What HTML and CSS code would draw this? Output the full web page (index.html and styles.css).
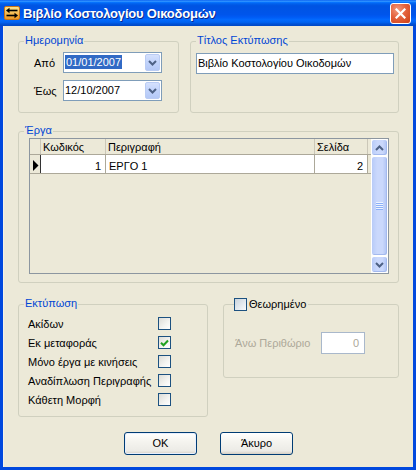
FILE: index.html
```html
<!DOCTYPE html>
<html>
<head>
<meta charset="utf-8">
<title>Βιβλίο Κοστολογίου Οικοδομών</title>
<link rel="stylesheet" href="styles.css">
</head>
<body>
<div class="window">
  <div class="titlebar">
    <svg class="app-icon" width="16" height="14" viewBox="0 0 16 14">
      <defs>
        <linearGradient id="ig" x1="0" y1="0" x2="0" y2="1">
          <stop offset="0" stop-color="#FFE68C"/>
          <stop offset="1" stop-color="#EE9420"/>
        </linearGradient>
      </defs>
      <rect x="0.5" y="0.5" width="15" height="13" rx="1.5" fill="url(#ig)" stroke="#C87418"/>
      <path d="M5 4.5H13.5" stroke="#000" stroke-width="1.6"/>
      <path d="M2 4.5L5.5 1.8V7.2Z" fill="#000"/>
      <path d="M2.5 9.5H11" stroke="#000" stroke-width="1.6"/>
      <path d="M14 9.5L10.5 6.8V12.2Z" fill="#000"/>
    </svg>
    <span class="title">Βιβλίο Κοστολογίου Οικοδομών</span>
    <div class="close">
      <svg width="11" height="11" viewBox="0 0 11 11"><path d="M1.5 1.5L9.5 9.5M9.5 1.5L1.5 9.5" stroke="#fff" stroke-width="2.2" stroke-linecap="square"/></svg>
    </div>
  </div>

  <div class="client">
    <div class="row-top">
      <div class="group g-date">
        <span class="legend">Ημερομηνία</span>
        <div class="date-grid">
          <span class="lbl">Από</span>
          <div class="combo">
            <span class="combo-text"><span class="sel">01/01/2007</span></span>
            <span class="drop"><svg width="9" height="6" viewBox="0 0 9 6"><path d="M1 1L4.5 4.5L8 1" stroke="#4D6185" stroke-width="2" fill="none"/></svg></span>
          </div>
          <span class="lbl">Έως</span>
          <div class="combo">
            <span class="combo-text">12/10/2007</span>
            <span class="drop"><svg width="9" height="6" viewBox="0 0 9 6"><path d="M1 1L4.5 4.5L8 1" stroke="#4D6185" stroke-width="2" fill="none"/></svg></span>
          </div>
        </div>
      </div>
      <div class="group g-title">
        <span class="legend">Τίτλος Εκτύπωσης</span>
        <div class="textbox">Βιβλίο Κοστολογίου Οικοδομών</div>
      </div>
    </div>

    <div class="group g-works">
      <span class="legend">Έργα</span>
      <div class="grid">
        <div class="grid-main">
          <div class="grow ghead">
            <div class="c ind"></div>
            <div class="c">Κωδικός</div>
            <div class="c">Περιγραφή</div>
            <div class="c">Σελίδα</div>
          </div>
          <div class="grow gdata">
            <div class="c ind"><svg width="6" height="11" viewBox="0 0 6 11"><path d="M0 0L5.5 5.5L0 11Z" fill="#000"/></svg></div>
            <div class="c num">1</div>
            <div class="c">ΕΡΓΟ 1</div>
            <div class="c num">2</div>
          </div>
        </div>
        <div class="vscroll">
          <div class="sbtn"><svg width="9" height="6" viewBox="0 0 9 6"><path d="M1 5L4.5 1.5L8 5" stroke="#4D6185" stroke-width="2" fill="none"/></svg></div>
          <div class="thumb">
            <svg width="7" height="8" viewBox="0 0 7 8">
              <path d="M0 0.5H7M0 2.5H7M0 4.5H7M0 6.5H7" stroke="#EEF4FE"/>
              <path d="M0 1.5H7M0 3.5H7M0 5.5H7M0 7.5H7" stroke="#8CB0F8"/>
            </svg>
          </div>
          <div class="sbtn"><svg width="9" height="6" viewBox="0 0 9 6"><path d="M1 1L4.5 4.5L8 1" stroke="#4D6185" stroke-width="2" fill="none"/></svg></div>
        </div>
      </div>
    </div>

    <div class="row-bottom">
      <div class="group g-print">
        <span class="legend">Εκτύπωση</span>
        <div class="opts">
          <span>Ακίδων</span><span class="cb"></span>
          <span>Εκ μεταφοράς</span><span class="cb"><svg width="9" height="8" viewBox="0 0 9 8"><path d="M1 3.8L3.5 6.3L8 1.5" stroke="#21A121" stroke-width="2" fill="none"/></svg></span>
          <span>Μόνο έργα με κινήσεις</span><span class="cb"></span>
          <span>Αναδίπλωση Περιγραφής</span><span class="cb"></span>
          <span>Κάθετη Μορφή</span><span class="cb"></span>
        </div>
      </div>
      <div class="group g-view">
        <span class="legend legend-cb"><span class="cb"></span><span class="legend-text">Θεωρημένο</span></span>
        <div class="margin-row">
          <span class="dis-lbl">Άνω Περιθώριο</span>
          <div class="tb-dis">0</div>
        </div>
      </div>
    </div>

    <div class="buttons">
      <div class="btn btn-default">OK</div>
      <div class="btn">Άκυρο</div>
    </div>
  </div>
</div>
</body>
</html>
```

FILE: styles.css
```css
html, body {
  margin: 0;
  padding: 0;
  background: #fff;
}
body {
  font-family: "Liberation Sans", Arial, sans-serif;
  font-size: 11px;
  color: #000;
}
.window {
  width: 416px;
  height: 470px;
  background: #0048DE;
  display: flex;
  flex-direction: column;
}
.titlebar {
  height: 26px;
  flex: none;
  display: flex;
  align-items: center;
  background: linear-gradient(180deg, #0058EE 0%, #3593FF 4%, #288EFF 6%, #127DFF 8%, #036FFC 10%, #0262EE 14%, #0057E5 20%, #0054E3 24%, #0055EB 56%, #005BF5 66%, #026AFE 76%, #0062EF 86%, #0052D6 92%, #0047C4 100%);
}
.app-icon {
  margin-left: 4px;
  margin-right: 3px;
  flex: none;
}
.title {
  flex: 1;
  color: #fff;
  font-weight: bold;
  font-size: 13px;
  letter-spacing: -0.2px;
  text-shadow: 1px 1px 0 #0A2A8C;
  padding-top: 1px;
}
.close {
  width: 21px;
  height: 21px;
  box-sizing: border-box;
  margin-right: 5px;
  border: 1px solid #fff;
  border-radius: 3px;
  background: radial-gradient(circle at 35% 30%, #F29A7F 0%, #E4623D 45%, #CC4016 100%);
  display: flex;
  align-items: center;
  justify-content: center;
}
.client {
  flex: 1;
  margin: 0 3px 3px;
  background: #ECE9D8;
  padding: 15px 14px 0 15px;
  box-shadow: inset 1px 0 0 #F4F2E8;
}

/* group boxes */
.group {
  position: relative;
  box-sizing: border-box;
  border: 1px solid #D0D0BF;
  border-radius: 3px;
}
.legend {
  position: absolute;
  top: -8px;
  left: 5px;
  padding: 0 1px;
  line-height: 13px;
  background: #ECE9D8;
  color: #0046D5;
}

.row-top {
  display: flex;
  gap: 11px;
  height: 72px;
}
.g-date {
  width: 161px;
  padding: 10px 0 0 15px;
}
.g-title {
  flex: 1;
  padding: 11px 0 0 5px;
}
.date-grid {
  display: grid;
  grid-template-columns: 29px 99px;
  grid-auto-rows: 21px;
  row-gap: 7px;
  align-items: center;
}
.combo {
  height: 21px;
  box-sizing: border-box;
  border: 1px solid #7F9DB9;
  background: #fff;
  display: flex;
  align-items: stretch;
}
.combo-text {
  flex: 1;
  padding-left: 1px;
  line-height: 19px;
}
.sel {
  background: #316AC5;
  color: #fff;
  padding: 1px 1px;
}
.drop {
  width: 15px;
  margin: 1px;
  box-sizing: border-box;
  border: 1px solid #BACCF4;
  border-radius: 2px;
  background: linear-gradient(180deg, #D5E1FD 0%, #C1D3FB 50%, #B4C8F6 100%);
  display: flex;
  align-items: center;
  justify-content: center;
}
.textbox {
  width: 198px;
  height: 21px;
  box-sizing: border-box;
  border: 1px solid #7F9DB9;
  background: #fff;
  padding-left: 1px;
  line-height: 19px;
  white-space: nowrap;
}

/* grid */
.g-works {
  margin-top: 18px;
  height: 152px;
  padding: 6px 0 0 10px;
}
.grid {
  width: 360px;
  height: 136px;
  box-sizing: border-box;
  border: 1px solid #8C96A0;
  background: #ECE9D8;
  display: flex;
}
.grid-main {
  flex: 1;
}
.grow {
  display: grid;
  grid-template-columns: 11px 65px 209px 53px;
}
.ghead {
  height: 16px;
  box-sizing: border-box;
  border-bottom: 1px solid #ACA899;
  line-height: 14px;
}
.ghead .c {
  box-sizing: border-box;
  border-right: 1px solid #CBC7B8;
  padding: 1px 0 0 2px;
  white-space: nowrap;
}
.ghead .ind {
  padding: 0;
}
.gdata {
  height: 19px;
  box-sizing: border-box;
  border-bottom: 1px solid #ACA899;
}
.gdata .c {
  box-sizing: border-box;
  height: 18px;
  background: #fff;
  border-right: 1px solid #ACA899;
  padding: 4px 3px 0 3px;
  line-height: 14px;
  white-space: nowrap;
}
.gdata .num {
  text-align: right;
  padding-right: 4px;
}
.gdata .ind {
  background: #ECE9D8;
  border-right: 1px solid #333;
  padding: 5px 0 0 3px;
}
.gdata .ind svg {
  display: block;
}
.vscroll {
  width: 17px;
  flex: none;
  display: flex;
  flex-direction: column;
  background: #FEFEFB;
}
.sbtn, .thumb {
  box-sizing: border-box;
  border: 1px solid #fff;
  border-radius: 3px;
  background: linear-gradient(90deg, #B8CBF8 0%, #CAD8FC 35%, #CAD8FC 70%, #AFC3F3 100%);
  box-shadow: inset -1px -1px 0 #A3B9EE;
  display: flex;
  align-items: center;
  justify-content: center;
}
.sbtn {
  height: 17px;
  flex: none;
}
.thumb {
  flex: 1;
}

/* bottom groups */
.row-bottom {
  display: flex;
  gap: 15px;
  margin-top: 21px;
  align-items: flex-start;
}
.g-print {
  width: 190px;
  height: 113px;
  padding: 9px 0 0 9px;
}
.opts {
  display: grid;
  grid-template-columns: 130px 13px;
  grid-auto-rows: 19px;
  align-items: center;
  white-space: nowrap;
}
.cb {
  width: 13px;
  height: 13px;
  box-sizing: border-box;
  border: 1px solid #1C5180;
  background: linear-gradient(135deg, #DCDCD7 0%, #F4F4F1 60%, #FFFFFF 100%);
  display: flex;
  align-items: center;
  justify-content: center;
}
.g-view {
  flex: 1;
  height: 74px;
  padding: 27px 0 0 11px;
}
.legend-cb {
  left: 10px;
  top: -7px;
  padding: 0 2px 0 0;
  display: flex;
  align-items: center;
  gap: 2px;
  color: #000;
}
.legend-cb .cb {
  background: linear-gradient(135deg, #C9D3DC 0%, #E6ECF1 60%, #FAFBFC 100%);
}
.margin-row {
  display: flex;
  align-items: center;
}
.dis-lbl {
  width: 86px;
  color: #ACA899;
}
.tb-dis {
  width: 44px;
  height: 22px;
  box-sizing: border-box;
  border: 1px solid #A9B8CB;
  background: #fff;
  color: #ACA899;
  text-align: right;
  padding-right: 5px;
  line-height: 20px;
}

/* buttons */
.buttons {
  display: flex;
  justify-content: center;
  gap: 23px;
  margin-top: 15px;
}
.btn {
  width: 73px;
  height: 23px;
  box-sizing: border-box;
  border: 1px solid #003C74;
  border-radius: 3px;
  background: linear-gradient(180deg, #FFFFFF 0%, #F5F4EF 40%, #ECEBE6 85%, #D6D0C5 100%);
  text-align: center;
  line-height: 21px;
}
.btn-default {
  box-shadow: inset 0 0 0 1px #E6EEFD;
}
```
